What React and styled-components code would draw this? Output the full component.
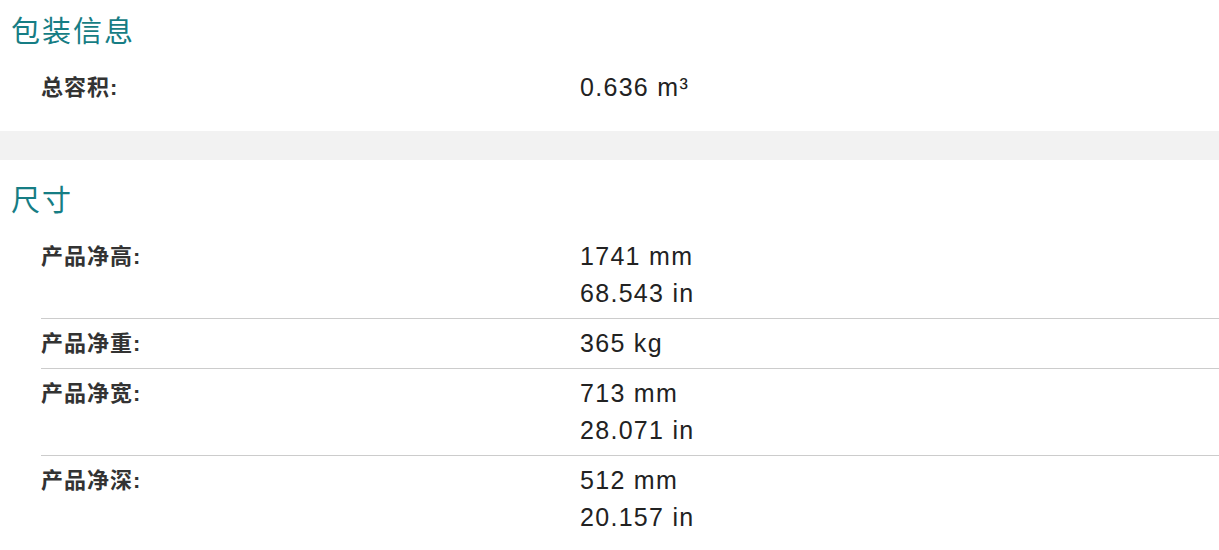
import React from "react";
import styled, { createGlobalStyle } from "styled-components";

const Global = createGlobalStyle`
  html, body { margin: 0; padding: 0; background: #fff; }
  body { font-family: "Liberation Sans", Arial, "Noto Sans CJK SC", sans-serif; }
`;

const Page = styled.div`
  width: 1219px;
  height: 550px;
  overflow: hidden;
  background: #fff;
`;

const Section = styled.section`
  padding: ${(p) => p.$top}px 0 ${(p) => p.$bottom}px 0;
`;

const Heading = styled.h2`
  margin: 0 0 14px 11px;
  height: 40px;
  line-height: 40px;
  font-family: "Noto Sans CJK SC", sans-serif;
  font-weight: 400;
  font-size: 29px;
  letter-spacing: 2px;
  color: #167d84;
`;

const Band = styled.div`
  height: 29px;
  background: #f2f2f2;
`;

const Table = styled.div`
  margin-left: 41px;
  display: flex;
  flex-direction: column;
`;

const Row = styled.div`
  display: grid;
  grid-template-columns: 539px 1fr;
  padding: 6px 0;
  & + & {
    border-top: 1px solid #cccccc;
  }
`;

const Label = styled.div`
  font-family: "Liberation Sans", "Noto Sans CJK SC", sans-serif;
  font-weight: 700;
  font-size: 22px;
  letter-spacing: 1px;
  line-height: 37px;
  color: #333;
`;

const Values = styled.div`
  display: flex;
  flex-direction: column;
`;

const Value = styled.div`
  font-family: "Liberation Sans", Arial, sans-serif;
  font-size: 25px;
  letter-spacing: 1.3px;
  line-height: 37px;
  color: #222;
`;

const packaging = [{ label: "总容积:", values: ["0.636 m³"] }];

const dimensions = [
  { label: "产品净高:", values: ["1741 mm", "68.543 in"] },
  { label: "产品净重:", values: ["365 kg"] },
  { label: "产品净宽:", values: ["713 mm", "28.071 in"] },
  { label: "产品净深:", values: ["512 mm", "20.157 in"] },
];

function SpecTable({ rows }) {
  return (
    <Table>
      {rows.map((r) => (
        <Row key={r.label}>
          <Label>{r.label}</Label>
          <Values>
            {r.values.map((v) => (
              <Value key={v}>{v}</Value>
            ))}
          </Values>
        </Row>
      ))}
    </Table>
  );
}

export default function App() {
  return (
    <Page>
      <Global />
      <Section $top={9} $bottom={19}>
        <Heading>包装信息</Heading>
        <SpecTable rows={packaging} />
      </Section>
      <Band />
      <Section $top={18} $bottom={0}>
        <Heading>尺寸</Heading>
        <SpecTable rows={dimensions} />
      </Section>
    </Page>
  );
}
